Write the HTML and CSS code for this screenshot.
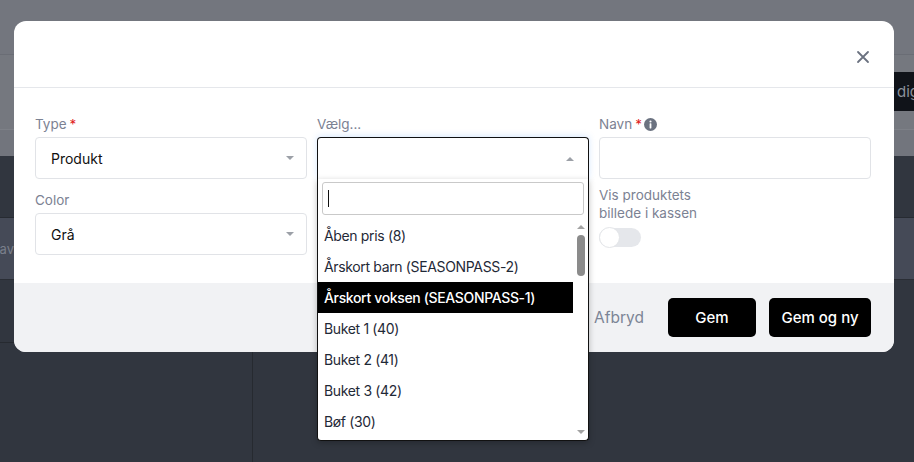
FILE: index.html
```html
<!DOCTYPE html>
<html lang="da">
<head>
<meta charset="utf-8">
<title>Produkt</title>
<link rel="stylesheet" href="styles.css">
</head>
<body>
<div class="page">
  <div class="topbar"></div>
  <div class="toolbar"><span class="dig-btn">dig</span></div>
  <div class="tabs"></div>
  <div class="content">
    <div class="row-a"></div>
    <div class="row-b"><span class="gav">Gav</span></div>
    <div class="row-c"><div class="side"></div><div class="main"></div></div>
  </div>
</div>

<div class="modal">
  <div class="modal-header">
    <button class="close" aria-label="Luk">
      <svg width="14" height="14" viewBox="0 0 14 14"><path d="M2 2 L12 12 M12 2 L2 12" stroke="#6b7280" stroke-width="1.8" stroke-linecap="round"/></svg>
    </button>
  </div>
  <div class="modal-body">
    <div class="col">
      <div class="field">
        <label class="lbl">Type <span class="req">*</span></label>
        <div class="select"><span class="val">Produkt</span><span class="caret"></span></div>
      </div>
      <div class="field">
        <label class="lbl">Color</label>
        <div class="select"><span class="val">Grå</span><span class="caret"></span></div>
      </div>
    </div>
    <div class="col">
      <div class="field">
        <label class="lbl">Vælg...</label>
        <div class="combo">
          <div class="select open"><span class="val"></span><span class="caret up"></span></div>
          <div class="dropdown">
            <div class="search"><span class="cursor"></span></div>
            <div class="listwrap">
              <ul class="options">
                <li>Åben pris (8)</li>
                <li>Årskort barn (SEASONPASS-2)</li>
                <li class="active">Årskort voksen (SEASONPASS-1)</li>
                <li>Buket 1 (40)</li>
                <li>Buket 2 (41)</li>
                <li>Buket 3 (42)</li>
                <li>Bøf (30)</li>
              </ul>
              <div class="scrollbar">
                <span class="arr-up"></span>
                <span class="thumb"></span>
                <span class="arr-down"></span>
              </div>
            </div>
          </div>
        </div>
      </div>
    </div>
    <div class="col">
      <div class="field">
        <label class="lbl">Navn <span class="req">*</span><svg class="info" width="13" height="13" viewBox="0 0 16 16"><circle cx="8" cy="8" r="8" fill="#6b7280"/><circle cx="8" cy="4.3" r="1.3" fill="#fff"/><rect x="6.9" y="6.6" width="2.2" height="6.4" rx="0.6" fill="#fff"/></svg></label>
        <div class="input"></div>
      </div>
      <div class="toggle-field">
        <div class="toggle-lbl">Vis produktets<br>billede i kassen</div>
        <div class="toggle"><span class="knob"></span></div>
      </div>
    </div>
  </div>
  <div class="modal-footer">
    <button class="btn-link">Afbryd</button>
    <button class="btn btn-gem">Gem</button>
    <button class="btn btn-new">Gem og ny</button>
  </div>
</div>
</body>
</html>
```

FILE: styles.css
```css
* { box-sizing: border-box; }
html, body { margin: 0; padding: 0; }
body {
  width: 914px;
  height: 462px;
  overflow: hidden;
  font-family: Inter, "Noto Sans", "Liberation Sans", sans-serif;
  background: #31363f;
  position: relative;
}

/* darkened background page */
.page { display: flex; flex-direction: column; height: 462px; }
.topbar { height: 55px; background: #73767e; border-bottom: 1px solid #6a6d75; }
.toolbar {
  height: 75px; background: #75787f; border-bottom: 1px solid #7d8087;
  display: flex; justify-content: flex-end; align-items: flex-start; padding-top: 17px;
}
.dig-btn {
  background: #101319; color: #8b909a; font-size: 15px; height: 39px;
  width: 20px;
  display: flex; align-items: center; padding-left: 3px;
  overflow: hidden; white-space: nowrap;
}
.tabs { height: 26px; background: #72757d; }
.content { flex: 1; display: flex; flex-direction: column; background: #31363f; }
.row-a { height: 62px; border-bottom: 1px solid #272b32; }
.row-b {
  height: 62px; background: #454a57; border-bottom: 1px solid #2a2e35;
  display: flex; align-items: center;
}
.gav { color: #7a7f8b; font-size: 13px; width: 14px; overflow: hidden; white-space: nowrap; direction: rtl; }
.row-c { flex: 1; display: flex; }
.row-c .side { width: 253px; border-right: 1px solid #262a30; border-top: 1px solid #262a30; margin-top: 62px; }
.row-c .main { flex: 1; }

/* modal */
.modal {
  position: absolute;
  left: 14px; top: 21px;
  width: 880px;
  background: #fff;
  border-radius: 12px;
}
.modal-header {
  height: 67px;
  border-bottom: 1px solid #e5e7eb;
  display: flex; justify-content: flex-end; align-items: center;
  padding-right: 24px;
  padding-top: 6px;
}
.close { border: 0; background: none; padding: 0; width: 14px; height: 14px; display: flex; }

.modal-body {
  display: grid;
  grid-template-columns: repeat(3, 1fr);
  column-gap: 10px;
  padding: 27px 23px 28px 21px;
}
.col { display: flex; flex-direction: column; gap: 12px; }
.field { display: flex; flex-direction: column; gap: 4px; }
.lbl {
  font-size: 13.5px; line-height: 18px; color: #7c8293;
  display: flex; align-items: center;
}
.req { color: #e11d1d; margin-left: 3px; }
.info { margin-left: 2px; }

.select, .input {
  height: 42px;
  border: 1px solid #e1e3e7;
  border-radius: 4px;
  display: flex; align-items: center; justify-content: space-between;
  padding: 0 12px 0 15px;
  background: #fff;
}
.val { font-size: 14px; color: #111; }
.caret {
  width: 0; height: 0;
  border-left: 4px solid transparent; border-right: 4px solid transparent;
  border-top: 4px solid #9ca0a7;
}
.caret.up { border-top: 0; border-bottom: 4px solid #9ca0a7; margin-right: 2px; }

.combo { position: relative; }
.select.open {
  border-color: #111;
  border-bottom: 0;
  border-radius: 4px 4px 0 0;
  box-shadow: 0 -1px 6px rgba(96, 165, 250, 0.25);
}
.dropdown {
  position: absolute;
  left: 0; right: 0; top: 42px;
  height: 262px;
  background: #fff;
  border: 1px solid #111;
  border-top: 0;
  border-radius: 0 0 4px 4px;
  box-shadow: 0 2px 6px rgba(0,0,0,0.25);
  z-index: 5;
  display: flex; flex-direction: column;
}
.search {
  margin: 3px 4px 0 4px;
  height: 33px;
  border: 1px solid #c9c9c9;
  border-radius: 3px;
  display: flex; align-items: center; padding-left: 5px;
}
.cursor { width: 1px; height: 17px; background: #111; }
.listwrap { display: flex; flex: 1; margin-top: 5px; }
.options {
  list-style: none; margin: 0; padding: 0; flex: 1;
}
.options li {
  height: 31px; line-height: 31px;
  font-size: 14px; color: #1f2937;
  letter-spacing: -0.35px;
  padding-left: 6px;
  white-space: nowrap;
}
.options li.active { background: #000; color: #fff; font-weight: 500; }
.scrollbar {
  width: 15px;
  display: flex; flex-direction: column; align-items: center;
  padding-top: 5px;
}
.arr-up, .arr-down {
  width: 0; height: 0;
  border-left: 4px solid transparent; border-right: 4px solid transparent;
}
.arr-up { border-bottom: 4px solid #a3a3a3; }
.arr-down { border-top: 4px solid #a3a3a3; margin-top: auto; margin-bottom: 6px; }
.thumb { width: 8px; height: 41px; background: #8b8b8b; border-radius: 4px; margin-top: 6px; }

.toggle-field { display: flex; flex-direction: column; gap: 6px; margin-top: -5px; }
.toggle-lbl { font-size: 13.5px; line-height: 18px; color: #7c8293; }
.toggle {
  width: 42px; height: 19px; border-radius: 10px; background: #e5e7eb;
  position: relative;
}
.knob {
  position: absolute; left: 0; top: -1px;
  width: 21px; height: 21px; border-radius: 50%;
  background: #fff; border: 1px solid #e3e5e8;
}

.modal-footer {
  background: #f1f2f4;
  height: 69px;
  border-radius: 0 0 12px 12px;
  display: flex; justify-content: flex-end; align-items: center;
  padding-right: 23px;
  gap: 13px;
}
.btn-link {
  border: 0; background: none; font-family: inherit;
  font-size: 15.5px; color: #7c8596; padding: 0; margin-right: 11px;
}
.btn {
  border: 0; background: #000; color: #fff;
  font-family: inherit; font-size: 15px; font-weight: 500;
  height: 39px; border-radius: 5px;
}
.btn-gem { width: 88px; }
.btn-new { width: 102px; }
```
